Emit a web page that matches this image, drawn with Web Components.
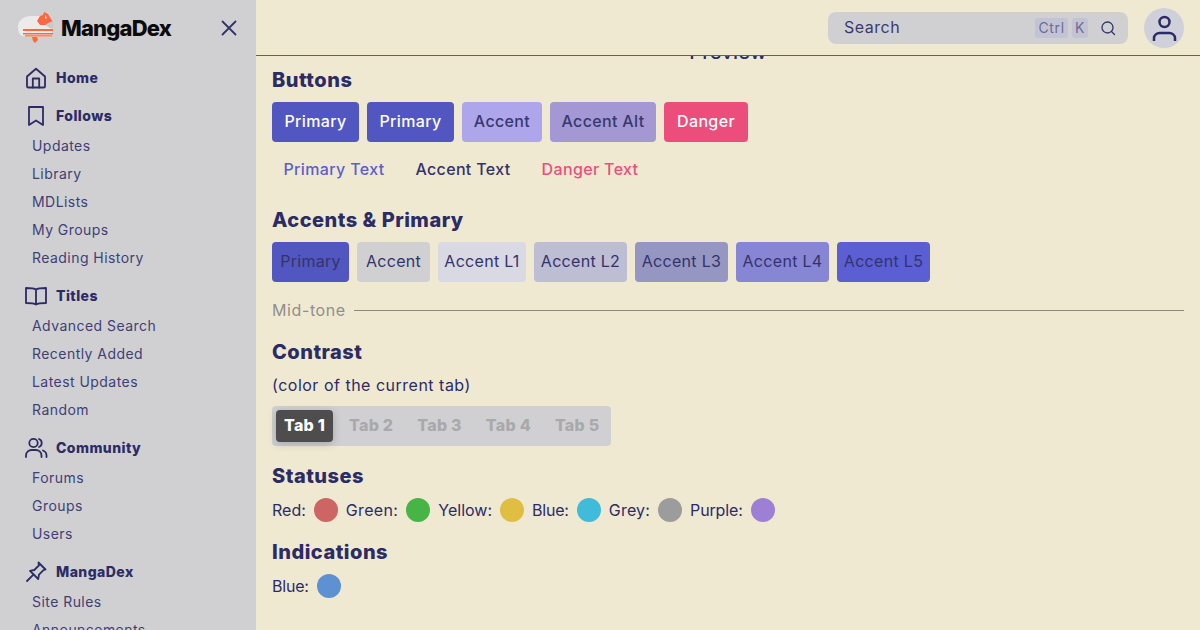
<!DOCTYPE html>
<html lang="en">
<head>
<meta charset="utf-8">
<title>MangaDex</title>
<style>
  html, body { margin: 0; height: 100%; overflow: hidden; }
  body { font-family: "Inter", "Liberation Sans", sans-serif; color: #2b2b66; background: #f0e9d2; }
</style>
</head>
<body>
<md-app>
  <md-sidebar slot="side">
    <nav-section label="Home" icon="home"></nav-section>
    <nav-section label="Follows" icon="bookmark">
      <nav-link>Updates</nav-link>
      <nav-link>Library</nav-link>
      <nav-link>MDLists</nav-link>
      <nav-link>My Groups</nav-link>
      <nav-link>Reading History</nav-link>
    </nav-section>
    <nav-section label="Titles" icon="book">
      <nav-link>Advanced Search</nav-link>
      <nav-link>Recently Added</nav-link>
      <nav-link>Latest Updates</nav-link>
      <nav-link>Random</nav-link>
    </nav-section>
    <nav-section label="Community" icon="users">
      <nav-link>Forums</nav-link>
      <nav-link>Groups</nav-link>
      <nav-link>Users</nav-link>
    </nav-section>
    <nav-section label="MangaDex" icon="pin">
      <nav-link>Site Rules</nav-link>
      <nav-link>Announcements</nav-link>
    </nav-section>
  </md-sidebar>
  <md-header slot="top"></md-header>
  <preview-title>Preview</preview-title>

  <md-heading>Buttons</md-heading>
  <btn-row>
    <md-btn w="87" bg="#5256c0" fg="#fff">Primary</md-btn>
    <md-btn w="87" bg="#5256c0" fg="#fff">Primary</md-btn>
    <md-btn w="80" bg="#aea6ea" fg="#38386f">Accent</md-btn>
    <md-btn w="106" bg="#a398d4" fg="#38386f">Accent Alt</md-btn>
    <md-btn w="84" bg="#ec4e7c" fg="#fff">Danger</md-btn>
  </btn-row>
  <btn-row next>
    <md-btn w="124" bg="transparent" fg="#5b5fc7">Primary Text</md-btn>
    <md-btn w="118" bg="transparent" fg="#33336b">Accent Text</md-btn>
    <md-btn w="120" bg="transparent" fg="#ec4e7c">Danger Text</md-btn>
  </btn-row>

  <md-heading>Accents &amp; Primary</md-heading>
  <btn-row>
    <md-btn light w="77" bg="#5256c0" fg="#33336b">Primary</md-btn>
    <md-btn light w="73" bg="#d0d0d3" fg="#33336b">Accent</md-btn>
    <md-btn light w="88" bg="#d9d9e3" fg="#33336b">Accent L1</md-btn>
    <md-btn light w="93" bg="#bdbdd3" fg="#33336b">Accent L2</md-btn>
    <md-btn light w="93" bg="#9696c2" fg="#33336b">Accent L3</md-btn>
    <md-btn light w="93" bg="#8686d4" fg="#33336b">Accent L4</md-btn>
    <md-btn light w="93" bg="#5c5fd4" fg="#33336b">Accent L5</md-btn>
  </btn-row>
  <mid-tone>Mid-tone</mid-tone>

  <md-heading>Contrast</md-heading>
  <md-line>(color of the current tab)</md-line>
  <tab-bar>
    <tab-item active>Tab 1</tab-item>
    <tab-item>Tab 2</tab-item>
    <tab-item>Tab 3</tab-item>
    <tab-item>Tab 4</tab-item>
    <tab-item>Tab 5</tab-item>
  </tab-bar>

  <md-heading>Statuses</md-heading>
  <swatch-row>
    <color-dot color="#cd6565">Red:</color-dot>
    <color-dot color="#46b546" style="letter-spacing:.35px">Green:</color-dot>
    <color-dot color="#dfbe42">Yellow:</color-dot>
    <color-dot color="#40bbd9" style="letter-spacing:-.2px">Blue:</color-dot>
    <color-dot color="#9c9c9c" style="letter-spacing:.2px">Grey:</color-dot>
    <color-dot color="#9d80d6" style="letter-spacing:-.15px">Purple:</color-dot>
  </swatch-row>

  <md-heading>Indications</md-heading>
  <swatch-row>
    <color-dot color="#5e91d4" style="letter-spacing:-.2px">Blue:</color-dot>
  </swatch-row>
</md-app>

<script>
// small helper, every element below is just a template + a shadow root
function define(name, css, html, setup) {
  customElements.define(name, class extends HTMLElement {
    constructor() {
      super();
      this.attachShadow({ mode: 'open' });
      this.shadowRoot.innerHTML = `<style>${css}</style>${html}`;
    }
    connectedCallback() {
      if (setup) setup(this, this.shadowRoot);
    }
  });
}

const ICONS = {
  home: '<path d="M3 10.500 12 2.800l9 7.700v9.700a1.300 1.300 0 0 1-1.300 1.300H4.300A1.300 1.300 0 0 1 3 20.200z"/><path d="M8.800 21.500V12.500h6.400v9"/>',
  bookmark: '<path d="M5 3h14v18l-7-4.500L5 21z"/>',
  book: '<path d="M12 5.500C10 4 6 4 2 4v15c4 0 8 0 10 1.500 2-1.500 6-1.500 10-1.500V4c-4 0-8 0-10 1.500zM12 5.500v15"/>',
  users: '<circle cx="9.500" cy="7" r="4.200"/><path d="M2 21v-1.500c0-3.500 3-5.500 5.500-5.500h4.500c2.500 0 5.500 2 5.500 5.500V21"/><path d="M15 3a4.300 4.300 0 0 1 0 8M19 14.500c2 .7 3.500 2.600 3.500 5V21"/>',
  pin: '<path d="M14.500 2.500l7 7-2 .7-4.500 4.500-.8 4.300-8.200-8.200 4.300-.8 4.500-4.500z"/><path d="M9.700 14.300 3 21"/>'
};

define('md-app', `
  :host { display: grid; grid-template-columns: 256px 1fr; height: 630px; overflow: hidden; background: #f0e9d2; }
  .main { display: flex; flex-direction: column; min-width: 0; height: 630px; overflow: hidden; }
  .page { display: flex; flex-direction: column; padding: 0 16px; margin-top: -18px; }
`, `
  <slot name="side"></slot>
  <div class="main">
    <slot name="top"></slot>
    <div class="page"><slot></slot></div>
  </div>
`);

define('md-sidebar', `
  :host { display: flex; flex-direction: column; gap: 10px; height: 630px; overflow: hidden; box-sizing: border-box; background: #d0d0d3; padding: 0 24px; }
  .brand { display: flex; flex: none; align-items: center; height: 54px; margin: 0 -9px 0 -6px; padding-top: 2px; box-sizing: border-box; }
  .name { font: 800 22px/1 "Inter", "Liberation Sans", sans-serif; color: #0b0b0b; letter-spacing: -0.8px; flex: 1; }
  svg { display: block; }
`, `
  <div class="brand">
    <svg width="43" height="32" viewBox="0 0 43 32">
      <path d="M0 15C0 8 6 4 13 4h9l12 8v12H5c-3 0-5-4-5-9z" fill="#ebebeb"/>
      <path d="M19 9l3-5 3-1 1-3 4 2 3 5 2 3-7 3-6 0z" fill="#ff6740"/>
      <path d="M28 12l7-3 .5 5-2 3-5-3z" fill="#c9c9c9"/>
      <path d="M27 3l2 3-2 1z" fill="#fff"/>
      <rect x="5" y="17" width="30" height="2" fill="#ff6740"/>
      <rect x="5" y="21" width="30" height="1.500" fill="#ff6740"/>
      <rect x="7" y="23" width="27" height="1.500" fill="#ff8a68"/>
      <path d="M14 25h5l1 3-3 3-2-2z" fill="#ff6740"/>
    </svg>
    <span class="name">MangaDex</span>
    <svg width="24" height="24" viewBox="0 0 24 24" fill="none" stroke="#33336b" stroke-width="1.800" stroke-linecap="round">
      <path d="M5.500 5.500l13 13M18.500 5.500l-13 13"/>
    </svg>
  </div>
  <slot></slot>
`);

define('nav-section', `
  :host { display: block; flex: none; }
  .head { display: flex; align-items: center; gap: 8px; height: 28px; font: 800 14px/28px "Inter", "Liberation Sans", sans-serif; color: #2b2b66; letter-spacing: 0.45px; }
  svg { width: 24px; height: 24px; fill: none; stroke: #2b2b66; stroke-width: 1.800; stroke-linejoin: round; stroke-linecap: round; flex: none; }
  .subs { display: flex; flex-direction: column; margin-top: 2px; }
  .subs.empty { display: none; }
`, `
  <div class="head"><svg viewBox="0 0 24 24"></svg><span></span></div>
  <div class="subs"><slot></slot></div>
`, (el, root) => {
  root.querySelector('span').textContent = el.getAttribute('label');
  root.querySelector('svg').innerHTML = ICONS[el.getAttribute('icon')];
  root.querySelector('.subs').classList.toggle('empty', !el.children.length);
});

define('nav-link', `
  :host { display: block; height: 28px; padding-left: 8px; font: 400 14px/28px "Inter", "Liberation Sans", sans-serif; color: #3f3f75; letter-spacing: 0.45px; white-space: nowrap; }
`, `<slot></slot>`);

define('md-header', `
  :host { display: flex; align-items: center; justify-content: flex-end; gap: 16px; height: 55px; flex: none; padding: 0 16px; background: #f0e9d2; border-bottom: 1px solid #5256c0; position: sticky; top: 0; z-index: 1; }
  .search { display: flex; align-items: center; box-sizing: border-box; width: 300px; height: 32px; padding: 0 12px 0 16px; gap: 4px; background: #d0d0d3; border-radius: 8px; font: 400 16px/24px "Inter", "Liberation Sans", sans-serif; color: #3a3a72; letter-spacing: 0.5px; }
  .label { flex: 1; position: relative; top: -1px; }
  .key { height: 20px; padding: 0 3px; border-radius: 3px; background: #c3c3d6; color: #6c6c92; font-size: 14px; line-height: 20px; letter-spacing: 0.7px; }
  .mag { margin-left: 8px; display: block; }
  .avatar { width: 40px; height: 40px; border-radius: 50%; background: #d0d0da; display: flex; align-items: center; justify-content: center; }
`, `
  <div class="search">
    <span class="label">Search</span>
    <span class="key">Ctrl</span><span class="key">K</span>
    <svg class="mag" width="16" height="16" viewBox="0 0 16 16" fill="none" stroke="#33336b" stroke-width="1.300" stroke-linecap="round"><circle cx="7.500" cy="7.500" r="5.500"/><path d="M11.500 11.500l3 3"/></svg>
  </div>
  <div class="avatar">
    <svg width="32" height="32" viewBox="0 0 32 32" fill="none" stroke="#2b2b66" stroke-width="2.500"><circle cx="16.500" cy="10" r="5"/><path d="M6 29v-3c0-3 3-5 5.500-5h10c2.500 0 5.500 2 5.500 5v3"/></svg>
  </div>
`);

define('preview-title', `
  :host { display: block; height: 28px; text-align: center; font: 500 20px/28px "Inter", "Liberation Sans", sans-serif; color: #2b2b66; letter-spacing: 0.2px; }
`, `<slot></slot>`);

define('md-heading', `
  :host { display: block; height: 28px; margin-bottom: 8px; font: 800 20px/28px "Inter", "Liberation Sans", sans-serif; color: #2b2b66; letter-spacing: 0.5px; }
  :host(:not(:first-of-type)) { margin-top: 16px; }
`, `<slot></slot>`);

define('btn-row', `
  :host { display: flex; gap: 8px; }
  :host([next]) { margin-top: 8px; }
`, `<slot></slot>`);

define('md-btn', `
  :host { display: flex; align-items: center; justify-content: center; box-sizing: border-box; height: 40px; padding-bottom: 2px; border-radius: 4px; font: 500 16px/24px "Inter", "Liberation Sans", sans-serif; letter-spacing: 0.35px; white-space: nowrap; }
  :host([light]) { font-weight: 400; letter-spacing: 0.3px; }
`, `<slot></slot>`, (el) => {
  el.style.width = el.getAttribute('w') + 'px';
  el.style.background = el.getAttribute('bg');
  el.style.color = el.getAttribute('fg');
});

define('mid-tone', `
  :host { display: flex; align-items: center; gap: 8px; height: 24px; margin-top: 16px; font: 400 16px/24px "Inter", "Liberation Sans", sans-serif; color: #918e8c; letter-spacing: 0.6px; }
  .rule { flex: 1; height: 1px; background: #8a8784; }
`, `<slot></slot><div class="rule"></div>`);

define('md-line', `
  :host { display: block; height: 24px; margin-bottom: 8px; margin-top: -1px; padding-bottom: 1px; font: 400 16px/24px "Inter", "Liberation Sans", sans-serif; color: #2b2b66; letter-spacing: 0.5px; }
`, `<slot></slot>`);

define('tab-bar', `
  :host { display: flex; align-self: flex-start; gap: 8px; padding: 4px; background: #d0d0d3; border-radius: 4px; }
`, `<slot></slot>`);

define('tab-item', `
  :host { display: block; height: 32px; padding: 0 8px; border-radius: 4px; font: 800 16px/31px "Inter", "Liberation Sans", sans-serif; color: #a9a9ab; letter-spacing: 0.25px; white-space: nowrap; }
  :host([active]) { background: #4d4d4d; color: #fff; box-shadow: 0 2px 8px rgba(0,0,0,.2); }
`, `<slot></slot>`);

define('swatch-row', `
  :host { display: flex; gap: 8px; height: 24px; }
`, `<slot></slot>`);

define('color-dot', `
  :host { display: flex; align-items: center; gap: 8px; font: 400 16px/24px "Inter", "Liberation Sans", sans-serif; color: #2b2b66; }
  i { display: block; width: 24px; height: 24px; border-radius: 50%; }
`, `<slot></slot><i></i>`, (el, root) => {
  root.querySelector('i').style.background = el.getAttribute('color');
});
</script>
</body>
</html>
